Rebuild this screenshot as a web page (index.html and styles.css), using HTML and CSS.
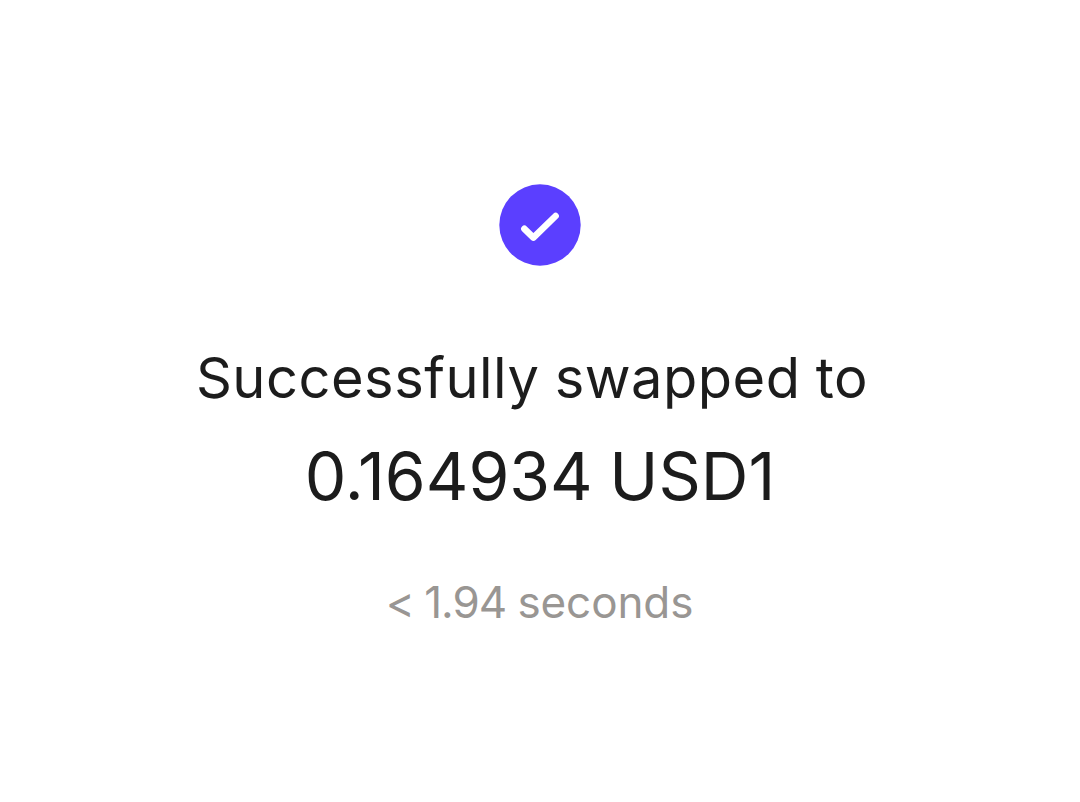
FILE: index.html
```html
<!DOCTYPE html>
<html lang="en">
<head>
  <meta charset="UTF-8">
  <title>Swap complete</title>
  <link rel="stylesheet" href="styles.css">
</head>
<body>
  <main class="result">
    <svg class="check" viewBox="0 0 82 82" aria-hidden="true">
      <circle cx="41" cy="41" r="40.7" fill="#5b3fff"/>
      <path d="M25.4 44.8L34.4 53.6L56.6 32" fill="none" stroke="#fff" stroke-width="6.6" stroke-linecap="round" stroke-linejoin="round"/>
    </svg>
    <h1 class="title">Successfully swapped to</h1>
    <p class="amount">0.164934 USD1</p>
    <p class="time"><span class="time-value">&lt; 1.94</span> seconds</p>
  </main>
</body>
</html>
```

FILE: styles.css
```css
* {
  box-sizing: border-box;
}

body {
  margin: 0;
  background: #fff;
  font-family: Inter, "Liberation Sans", sans-serif;
  color: #1c1c1c;
}

.result {
  display: flex;
  flex-direction: column;
  align-items: center;
  padding-top: 184px;
}

.check {
  width: 82px;
  height: 82px;
}

.title,
.amount,
.time {
  margin: 0;
  font-weight: 400;
  white-space: nowrap;
}

.title {
  margin-top: 76px;
  margin-right: 16px;
  font-size: 56px;
  line-height: 72px;
  letter-spacing: 0.5px;
  word-spacing: -1px;
}

.amount {
  margin-top: 22px;
  font-size: 66px;
  line-height: 80px;
  letter-spacing: 0;
  word-spacing: -2px;
}

.time {
  margin-top: 58px;
  margin-right: 1px;
  font-size: 44px;
  line-height: 56px;
  letter-spacing: -0.1px;
  word-spacing: -1px;
  color: #999693;
}

.time-value {
  letter-spacing: -1px;
}
```
